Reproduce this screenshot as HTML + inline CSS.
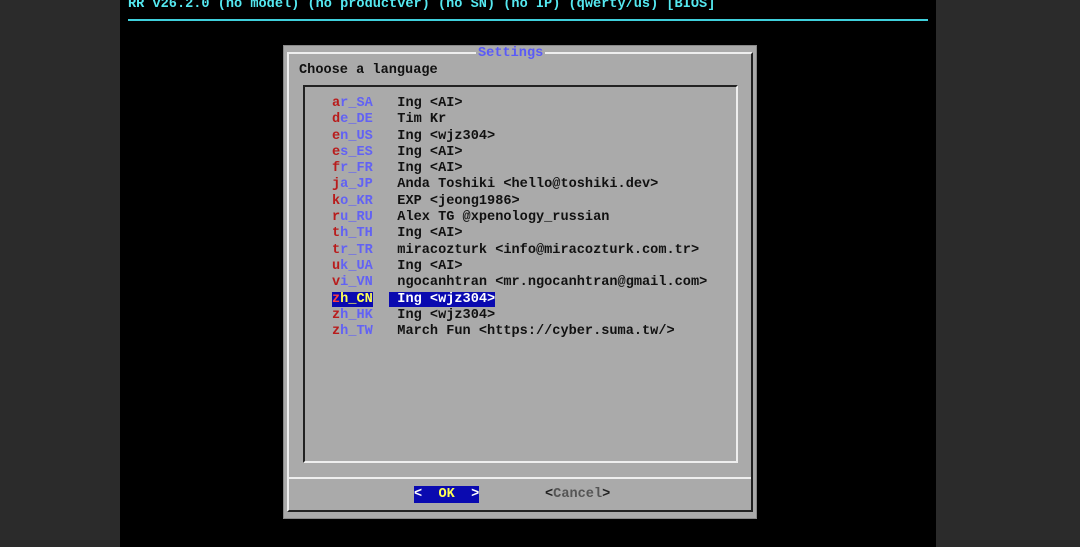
<!DOCTYPE html>
<html><head><meta charset="utf-8"><style>
*{margin:0;padding:0;box-sizing:border-box}
body{width:1080px;height:547px;background:#2b2b2b;position:relative;overflow:hidden;font-family:"Liberation Mono",monospace;font-size:13.6px;font-weight:bold}
.a{position:absolute;white-space:pre;line-height:16px}
#scr{position:absolute;left:120px;top:0;width:816px;height:547px;background:#000}
.r{color:#b81c1c}.b{color:#6262f4}.k{color:#111}
</style></head><body>
<div id="scr"></div>
<div class="a" style="left:128px;top:-3px;color:#55e8f0">RR v26.2.0 (no model) (no productver) (no SN) (no IP) (qwerty/us) [BIOS]</div>
<div class="a" style="left:128px;top:19px;width:800px;height:2px;background:#3fd0dc"></div>
<div class="a" style="left:283px;top:45px;width:474px;height:474px;background:#aaa;border:1px solid #888"></div>
<div class="a" style="left:287px;top:52px;width:466px;height:460px;border-top:2px solid #eee;border-left:2px solid #eee;border-right:2px solid #222;border-bottom:2px solid #222"></div>
<div class="a" style="left:476px;top:46px;background:#aaa;color:#5a5af8;padding:0 2px;height:12px">Settings</div>
<div class="a k" style="left:299px;top:63px">Choose a language</div>
<div class="a" style="left:303px;top:85px;width:435px;height:378px;border-top:2px solid #222;border-left:2px solid #222;border-right:2px solid #eee;border-bottom:2px solid #eee"></div>
<div class="a" style="left:289px;top:477px;width:462px;height:2px;background:#eee"></div>
<div class="a" style="left:332px;top:96px;line-height:16.3px"><span class="r">a</span><span class="b">r_SA</span>   <span class="k">Ing &lt;AI&gt;</span>
<span class="r">d</span><span class="b">e_DE</span>   <span class="k">Tim Kr</span>
<span class="r">e</span><span class="b">n_US</span>   <span class="k">Ing &lt;wjz304&gt;</span>
<span class="r">e</span><span class="b">s_ES</span>   <span class="k">Ing &lt;AI&gt;</span>
<span class="r">f</span><span class="b">r_FR</span>   <span class="k">Ing &lt;AI&gt;</span>
<span class="r">j</span><span class="b">a_JP</span>   <span class="k">Anda Toshiki &lt;hello@toshiki.dev&gt;</span>
<span class="r">k</span><span class="b">o_KR</span>   <span class="k">EXP &lt;jeong1986&gt;</span>
<span class="r">r</span><span class="b">u_RU</span>   <span class="k">Alex TG @xpenology_russian</span>
<span class="r">t</span><span class="b">h_TH</span>   <span class="k">Ing &lt;AI&gt;</span>
<span class="r">t</span><span class="b">r_TR</span>   <span class="k">miracozturk &lt;info@miracozturk.com.tr&gt;</span>
<span class="r">u</span><span class="b">k_UA</span>   <span class="k">Ing &lt;AI&gt;</span>
<span class="r">v</span><span class="b">i_VN</span>   <span class="k">ngocanhtran &lt;mr.ngocanhtran@gmail.com&gt;</span>
<span style="background:#0a0ab0"><span style="color:#ff4040">z</span><span style="color:#ffff55">h_CN</span></span>  <span style="background:#0a0ab0;color:#fff"> Ing &lt;wjz304&gt;</span>
<span class="r">z</span><span class="b">h_HK</span>   <span class="k">Ing &lt;wjz304&gt;</span>
<span class="r">z</span><span class="b">h_TW</span>   <span class="k">March Fun &lt;https://cyber.suma.tw/&gt;</span></div>
<div class="a" style="left:414px;top:486px;background:#0a0ab0;color:#fff;height:17px;line-height:17px">&lt;  <span style="color:#ffff55">OK</span>  &gt;</div>
<div class="a" style="left:545px;top:486px;color:#222;line-height:17px">&lt;<span style="color:#555">Cancel</span>&gt;</div>
</body></html>
